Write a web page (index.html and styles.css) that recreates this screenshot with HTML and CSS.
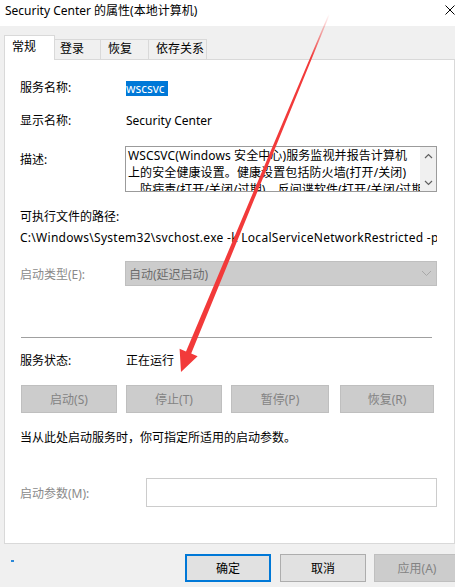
FILE: index.html
```html
<!DOCTYPE html>
<html lang="zh-CN">
<head>
<meta charset="utf-8">
<title>Security Center 的属性(本地计算机)</title>
<link rel="stylesheet" href="styles.css">
</head>
<body>
<div class="window">
  <div class="titlebar">
    <span class="title">Security Center 的属性(本地计算机)</span>
    <svg class="close" width="10" height="10" viewBox="0 0 10 10"><path d="M0.5 0.5 L9.5 9.5 M9.5 0.5 L0.5 9.5" stroke="#000" stroke-width="1" fill="none"/></svg>
  </div>
  <div class="main">
    <div class="tabs">
      <div class="tab active">常规</div>
      <div class="tab t-login">登录</div>
      <div class="tab t-recover">恢复</div>
      <div class="tab t-deps">依存关系</div>
    </div>
    <div class="panel">
      <div class="row">
        <span class="label">服务名称:</span>
        <span class="sel">wscsvc</span>
      </div>
      <div class="row gap17">
        <span class="label">显示名称:</span>
        <span class="value">Security Center</span>
      </div>
      <div class="desc-row">
        <span class="label desc-label">描述:</span>
        <div class="desc-box">
          <div class="desc-text">WSCSVC(Windows 安全中心)服务监视并报告计算机<br>上的安全健康设置。健康设置包括防火墙(打开/关闭)<br>、防病毒(打开/关闭/过期)、反间谍软件(打开/关闭/过期)</div>
          <div class="vscroll">
            <svg width="9" height="6" viewBox="0 0 9 6"><path d="M1 5 L4.5 1.5 L8 5" stroke="#606060" stroke-width="1.2" fill="none"/></svg>
            <svg width="9" height="6" viewBox="0 0 9 6"><path d="M1 1 L4.5 4.5 L8 1" stroke="#606060" stroke-width="1.2" fill="none"/></svg>
          </div>
        </div>
      </div>
      <div class="line exe-label">可执行文件的路径:</div>
      <div class="line path">C:\Windows\System32\svchost.exe -k LocalServiceNetworkRestricted -p</div>
      <div class="start-row">
        <span class="label disabled">启动类型(E):</span>
        <div class="combo">
          <span>自动(延迟启动)</span>
          <svg width="11" height="7" viewBox="0 0 11 7"><path d="M1 1 L5.5 5.5 L10 1" stroke="#a8a8a8" stroke-width="1" fill="none"/></svg>
        </div>
      </div>
      <div class="separator"></div>
      <div class="row status-row">
        <span class="label">服务状态:</span>
        <span class="value">正在运行</span>
      </div>
      <div class="svc-buttons">
        <div class="btn off">启动(S)</div>
        <div class="btn off">停止(T)</div>
        <div class="btn off">暂停(P)</div>
        <div class="btn off">恢复(R)</div>
      </div>
      <div class="line note">当从此处启动服务时，你可指定所适用的启动参数。</div>
      <div class="param-row">
        <span class="label disabled param-label">启动参数(M):</span>
        <div class="param-input"></div>
      </div>
    </div>
    <div class="footer">
      <span class="grip"></span>
      <div class="btn ok">确定</div>
      <div class="btn cancel">取消</div>
      <div class="btn off apply">应用(A)</div>
    </div>
  </div>
</div>
<svg class="arrow" width="465" height="587" viewBox="0 0 465 587">
  <defs>
    <linearGradient id="fade" gradientUnits="userSpaceOnUse" x1="329" y1="14" x2="181" y2="371">
      <stop offset="0" stop-color="#f23a3a" stop-opacity="0"/>
      <stop offset="0.12" stop-color="#f23a3a" stop-opacity="1"/>
      <stop offset="1" stop-color="#f23a3a" stop-opacity="1"/>
    </linearGradient>
  </defs>
  <polygon fill="url(#fade)" points="328.6,14 329.8,14.4 191.2,353.6 197.6,356.2 181,372 179.6,348.8 186.0,351.4"/>
</svg>
</body>
</html>
```

FILE: styles.css
```css
* { box-sizing: border-box; }
html, body { margin: 0; padding: 0; background: #ffffff; }
body {
  width: 465px;
  height: 587px;
  position: relative;
  overflow: hidden;
  font-family: "Noto Sans", "Noto Sans CJK SC", sans-serif;
  font-size: 12px;
  color: #000;
}
.window {
  width: 455px;
  height: 587px;
  overflow: hidden;
}
.titlebar {
  height: 26px;
  background: #fff;
  display: flex;
  align-items: flex-start;
  padding: 3px 0 0 5px;
  line-height: 16px;
}
.title { flex: 1; }
.close { margin: 2px 0 0 0; flex: none; }
.main {
  background: #f0f0f0;
  height: 561px;
  padding-top: 9px;
}
.tabs {
  display: flex;
  align-items: flex-end;
  height: 25px;
  margin-left: 4px;
  position: relative;
  z-index: 1;
}
.tab {
  border: 1px solid #d9d9d9;
  border-bottom: none;
  line-height: 16px;
  height: 20px;
  margin-bottom: 1px;
  padding-top: 1px;
  background: #f0f0f0;
  white-space: nowrap;
}
.tab.active {
  background: #fff;
  height: 25px;
  margin-bottom: 0;
  width: 51px;
  padding: 3px 0 0 7px;
}
.t-login { width: 46px; border-left: none; padding-left: 5px; }
.t-recover { width: 48px; border-left: none; padding-left: 7px; }
.t-deps { width: 58px; border-left: none; padding-left: 7px; }
.panel {
  margin: -1px 0 0 4px;
  width: 451px;
  height: 485px;
  border: 1px solid #d9d9d9;
  background: #fff;
  padding: 20px 0 0 15px;
}
.row {
  display: flex;
  height: 16px;
  line-height: 16px;
}
.gap17 { margin-top: 17px; }
.label { width: 106px; flex: none; white-space: nowrap; }
.disabled { color: #8a8a8a; }
.sel {
  display: inline-block;
  height: 15px;
  line-height: 15px;
  margin-top: 1px;
  background: #0078d7;
  color: #fff;
  padding-right: 3px;
}
.desc-row {
  display: flex;
  align-items: flex-start;
  margin-top: 17px;
}
.desc-label { width: 105px; padding-top: 6px; line-height: 16px; }
.desc-box {
  width: 312px;
  height: 46px;
  border: 1px solid #9b9b9b;
  display: flex;
  overflow: hidden;
}
.desc-text {
  flex: 1;
  padding-left: 2px;
  line-height: 17px;
  white-space: nowrap;
  overflow: hidden;
  letter-spacing: 0.1px;
}
.vscroll {
  width: 16px;
  flex: none;
  background: #f0f0f0;
  display: flex;
  flex-direction: column;
  align-items: center;
  justify-content: space-between;
  padding: 6px 0 5px;
}
.vscroll svg { display: block; }
.line { line-height: 16px; height: 16px; white-space: nowrap; }
.exe-label { margin-top: 17px; }
.path { margin-top: 5px; width: 417px; overflow: hidden; letter-spacing: 0.28px; }
.start-row {
  display: flex;
  align-items: center;
  margin-top: 15px;
  height: 25px;
}
.start-row .label { width: 105px; }
.combo {
  width: 312px;
  height: 25px;
  background: #cccccc;
  border: 1px solid #bfbfbf;
  display: flex;
  align-items: center;
  justify-content: space-between;
  padding: 0 4px 0 3px;
  color: #6d6d6d;
}
.separator {
  margin: 51px 0 0 1px;
  width: 411px;
  height: 1px;
  background: #a0a0a0;
}
.status-row { margin-top: 15px; }
.svc-buttons {
  display: grid;
  grid-template-columns: 96px 96px 98px 96px;
  column-gap: 9px;
  margin: 16px 0 0 1px;
  width: 416px;
}
.svc-buttons .btn:last-child { margin-left: 2px; }
.btn {
  height: 28px;
  display: flex;
  align-items: center;
  justify-content: center;
  background: #e1e1e1;
  border: 1px solid #adadad;
  white-space: nowrap;
}
.btn.off {
  background: #cccccc;
  border-color: #bfbfbf;
  color: #838383;
}
.note { margin-top: 17px; }
.param-row {
  display: flex;
  align-items: center;
  height: 29px;
  margin-top: 32px;
}
.param-label { width: 126px; }
.param-input {
  width: 291px;
  height: 29px;
  border: 1px solid #cccccc;
  background: #fff;
}
.footer {
  display: flex;
  align-items: flex-start;
  margin-top: 10px;
}
.grip {
  width: 3px;
  height: 2px;
  background: #2b88d8;
  margin: 6px 0 0 11px;
  flex: none;
}
.footer .btn { width: 86px; flex: none; }
.ok { margin-left: 171px; border: 2px solid #0078d7; }
.cancel { margin-left: 9px; }
.apply { margin-left: 8px; }
.arrow {
  position: absolute;
  left: 0;
  top: 0;
  pointer-events: none;
}
```
